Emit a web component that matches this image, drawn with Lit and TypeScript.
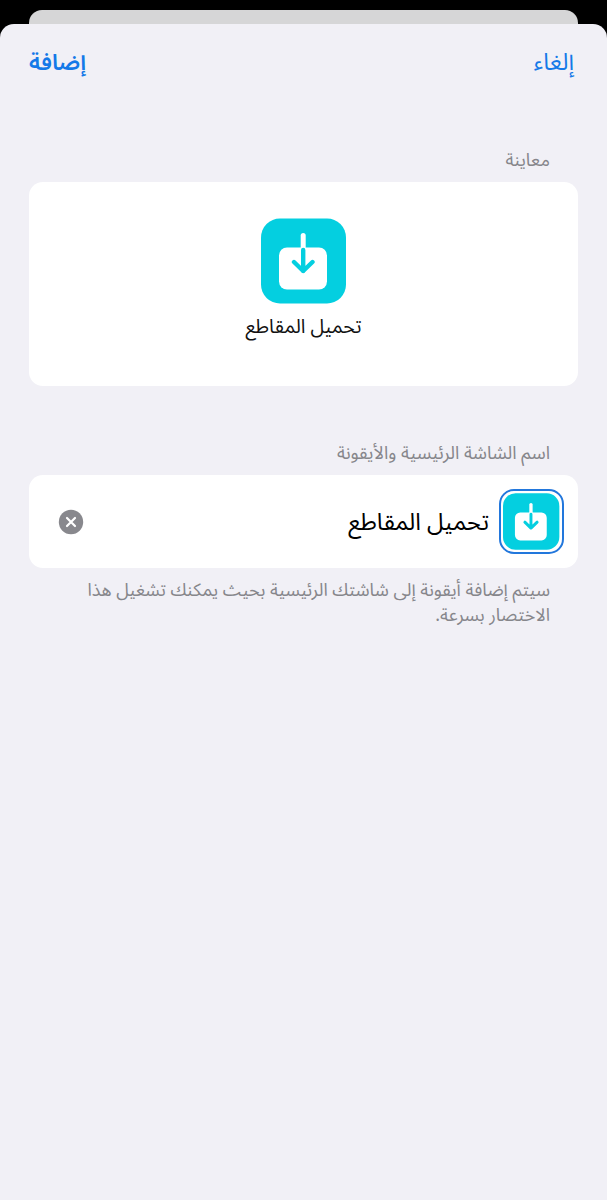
import { LitElement, html, css, svg } from 'lit';
import { customElement, property } from 'lit/decorators.js';

@customElement('shortcut-icon')
class ShortcutIcon extends LitElement {
  static styles = css`
    :host { display: block; }
    svg { display: block; width: 100%; height: 100%; }
  `;
  render() {
    return html`<svg viewBox="0 0 86 86" aria-hidden="true">
      ${svg`<rect x="0" y="0.5" width="85" height="85" rx="19" fill="#04cfe0"/>
      <rect x="18" y="29.5" width="48" height="42" rx="8" fill="#fff"/>
      <path d="M42.2 17.5V30" stroke="#fff" stroke-width="5" stroke-linecap="round"/>
      <path d="M42.2 32V53M33 44L42.2 53L51.5 44" fill="none" stroke="#04cfe0" stroke-width="4.4" stroke-linecap="round" stroke-linejoin="round"/>`}
    </svg>`;
  }
}

@customElement('app-root')
class AppRoot extends LitElement {
  @property() name = 'تحميل المقاطع';

  static styles = css`
    :host {
      display: block;
      height: 1200px;
      background: #000;
      direction: rtl;
      font-family: "Noto Sans Arabic", "DejaVu Sans", sans-serif;
      overflow: hidden;
    }
    * { box-sizing: border-box; }
    .screen { display: flex; flex-direction: column; height: 100%; padding-top: 10px; }
    .behind { height: 14px; margin: 0 29px; border-radius: 13px 13px 0 0; background: #d6d6d7; flex: none; }
    .sheet { flex: 1; background: #f1f0f6; border-radius: 14px 14px 0 0; padding: 0 29px; }
    .bar { display: flex; justify-content: space-between; align-items: center; height: 78px; padding-right: 4px; }
    .action { color: #1479e8; font-size: 23.5px; line-height: 30px; white-space: nowrap; }
    .done { font-size: 22.6px; font-weight: 600; }
    .label { color: #86868b; font-size: 18.1px; line-height: 26px; padding: 0 28px; white-space: nowrap; }
    .first { margin-top: 45px; }
    .card { background: #fff; border-radius: 14px; }
    .preview { height: 204px; margin-top: 9px; display: flex; flex-direction: column; align-items: center; padding-top: 36px; }
    .big { width: 86px; height: 86px; }
    .caption { font-size: 19.5px; line-height: 26px; margin-top: 10px; color: #111; white-space: nowrap; }
    .second { margin-top: 54px; }
    .row { height: 93px; margin-top: 9px; display: flex; align-items: center; padding: 0 14px 0 29px; }
    .ring { width: 65px; height: 65px; border: 2px solid #2277dc; border-radius: 15px; padding: 2px; background: #fff; flex: none; }
    .small { width: 57px; height: 57px; }
    .field { font-size: 23.7px; line-height: 32px; margin-right: 10px; flex: 1; white-space: nowrap; }
    .clear { width: 26px; height: 26px; flex: none; display: block; }
    .note { color: #86868b; font-size: 17.95px; line-height: 25px; margin-top: 10px; padding: 0 28px; white-space: nowrap; }
  `;

  render() {
    return html`
      <div class="screen">
        <div class="behind"></div>
        <main class="sheet">
          <div class="bar">
            <span class="action">إلغاء</span>
            <span class="action done">إضافة</span>
          </div>
          <div class="label first">معاينة</div>
          <div class="card preview">
            <shortcut-icon class="big"></shortcut-icon>
            <div class="caption">${this.name}</div>
          </div>
          <div class="label second">اسم الشاشة الرئيسية والأيقونة</div>
          <div class="card row">
            <div class="ring"><shortcut-icon class="small"></shortcut-icon></div>
            <div class="field">${this.name}</div>
            <svg class="clear" viewBox="0 0 26 26">
              <circle cx="13" cy="13" r="12.2" fill="#88888d"/>
              <path d="M9 9L17 17M17 9L9 17" stroke="#fff" stroke-width="2.2" stroke-linecap="round"/>
            </svg>
          </div>
          <div class="note">
            سيتم إضافة أيقونة إلى شاشتك الرئيسية بحيث يمكنك تشغيل هذا<br>
            الاختصار بسرعة.
          </div>
        </main>
      </div>`;
  }
}
